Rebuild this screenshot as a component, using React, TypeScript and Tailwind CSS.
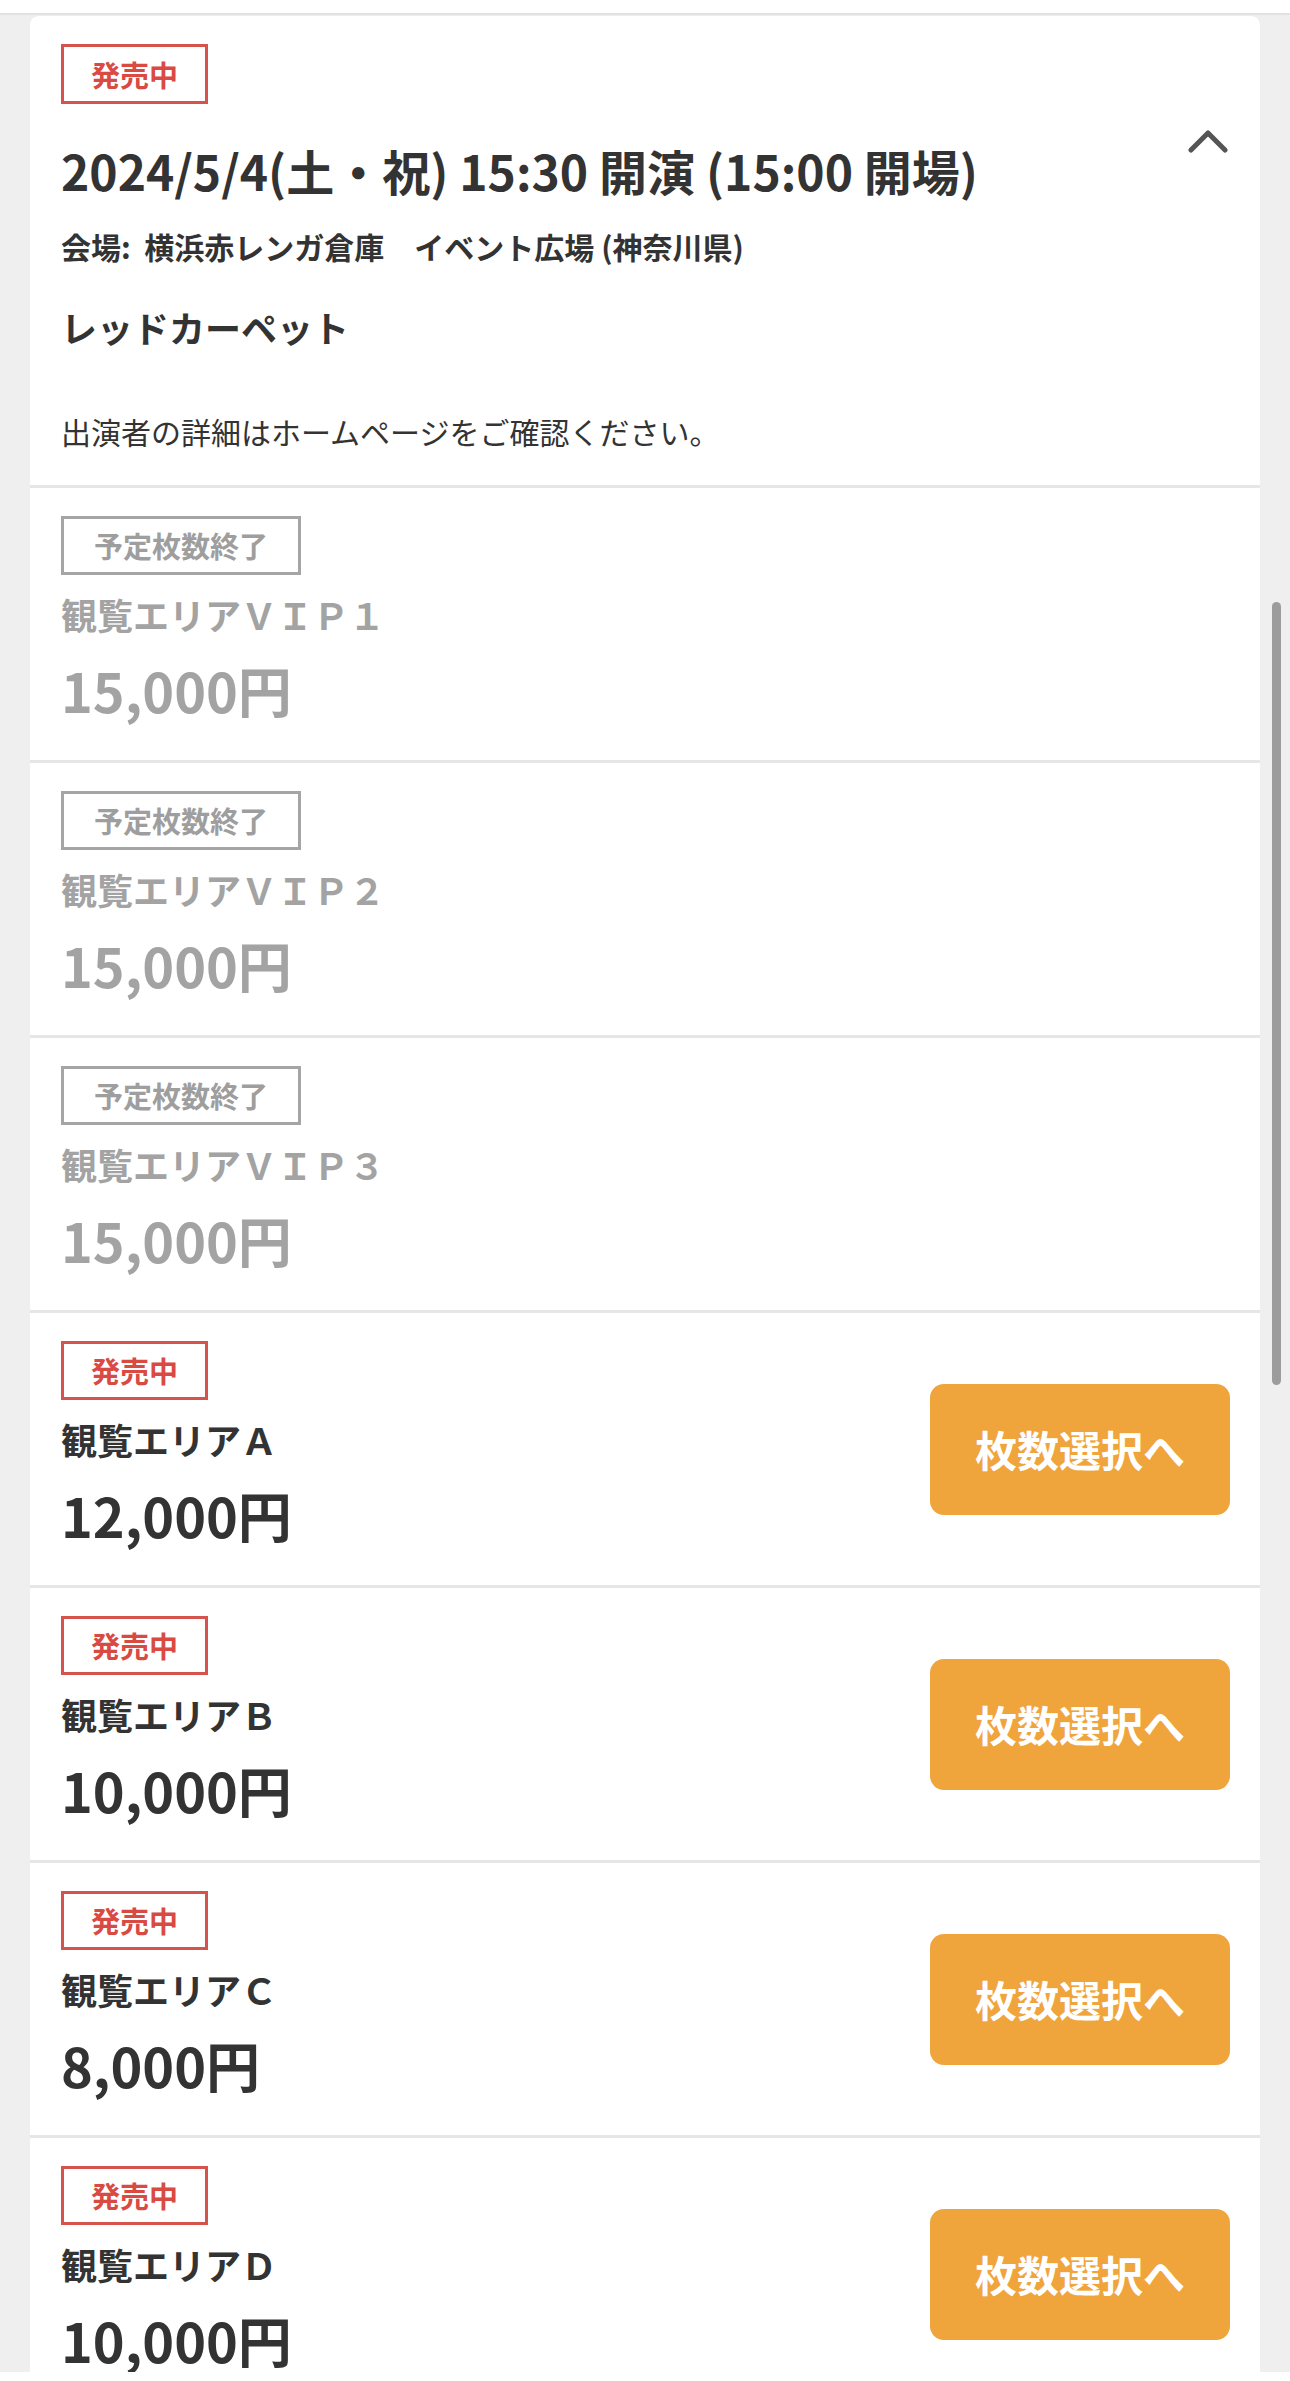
import React from "react";

type Ticket = {
  name: string;
  price: string;
  soldOut: boolean;
};

const tickets: Ticket[] = [
  { name: "観覧エリアＶＩＰ１", price: "15,000円", soldOut: true },
  { name: "観覧エリアＶＩＰ２", price: "15,000円", soldOut: true },
  { name: "観覧エリアＶＩＰ３", price: "15,000円", soldOut: true },
  { name: "観覧エリアＡ", price: "12,000円", soldOut: false },
  { name: "観覧エリアＢ", price: "10,000円", soldOut: false },
  { name: "観覧エリアＣ", price: "8,000円", soldOut: false },
  { name: "観覧エリアＤ", price: "10,000円", soldOut: false },
];

const StatusBadge = ({ soldOut }: { soldOut: boolean }) => {
  if (soldOut) {
    return (
      <span className="flex h-[59px] w-fit items-center border-[3px] border-[#a5a5a5] px-[30px] text-[29px] font-bold leading-none text-[#9e9e9e]">
        予定枚数終了
      </span>
    );
  }
  return (
    <span className="flex h-[59px] w-fit items-center border-[3px] border-[#d4544d] px-[27px] text-[29px] font-bold leading-none text-[#d94a43]">
      発売中
    </span>
  );
};

const TicketRow = ({ ticket }: { ticket: Ticket }) => {
  const textColor = ticket.soldOut ? "text-[#a3a3a3]" : "text-[#333333]";
  return (
    <div className="flex h-[272px] shrink-0 items-center justify-between bg-white pl-[31px] pr-[30px]">
      <div className="flex h-full flex-col pt-[28px]">
        <StatusBadge soldOut={ticket.soldOut} />
        <span className={`mt-[21px] text-[36px] font-bold leading-none ${textColor}`}>
          {ticket.name}
        </span>
        <span className={`mt-[31px] text-[54px] font-bold leading-none ${textColor}`}>
          {ticket.price}
        </span>
      </div>
      {!ticket.soldOut && (
        <button className="flex h-[131px] w-[300px] items-center justify-center rounded-[14px] bg-[#f0a43c] text-[42px] font-bold leading-none text-white">
          枚数選択へ
        </button>
      )}
    </div>
  );
};

export default function App() {
  return (
    <div className="relative flex h-[2381px] w-[1290px] flex-col overflow-hidden bg-[#efefef] font-['Noto_Sans_CJK_JP','Noto_Sans',sans-serif]">
      <div className="h-[15px] shrink-0 border-b-[2px] border-[#e2e2e2] bg-white" />
      <div className="flex min-h-0 flex-1 flex-col px-[30px] pt-[1px]">
        <div className="flex min-h-0 flex-1 flex-col gap-[3px] overflow-hidden rounded-t-[8px] bg-[#e6e6e6]">
          {/* event header */}
          <div className="flex shrink-0 items-start justify-between rounded-t-[8px] bg-white pb-[39px] pl-[31px] pr-[32px] pt-[28px] text-[#333333]">
            <div className="flex flex-col">
              <span className="flex h-[60px] w-fit items-center border-[3px] border-[#d4544d] px-[27px] text-[29px] font-bold leading-none text-[#d94a43]">
                発売中
              </span>
              <h1 className="mt-[42px] text-[48px] font-bold leading-none">
                2024/5/4(土・祝) 15:30 開演 (15:00 開場)
              </h1>
              <p className="mt-[37px] text-[30px] font-bold leading-none">
                会場:&nbsp; 横浜赤レンガ倉庫　イベント広場 (神奈川県)
              </p>
              <p className="mt-[48px] text-[36px] font-bold leading-none">レッドカーペット</p>
              <p className="mt-[71px] text-[30px] leading-none">
                出演者の詳細はホームページをご確認ください。
              </p>
            </div>
            <svg
              width="40"
              height="24"
              viewBox="0 0 40 24"
              className="mt-[85px]"
              fill="none"
              stroke="#555555"
              strokeWidth="5"
              strokeLinecap="round"
              strokeLinejoin="round"
            >
              <path d="M3 21 L20 4 L37 21" />
            </svg>
          </div>
          {tickets.map((t) => (
            <TicketRow key={t.name} ticket={t} />
          ))}
        </div>
      </div>
      <div className="h-[9px] shrink-0 bg-white" />
      {/* overlay scrollbar */}
      <div className="absolute left-[1272px] top-[602px] h-[783px] w-[9px] rounded-full bg-[#9c9c9c]" />
    </div>
  );
}
